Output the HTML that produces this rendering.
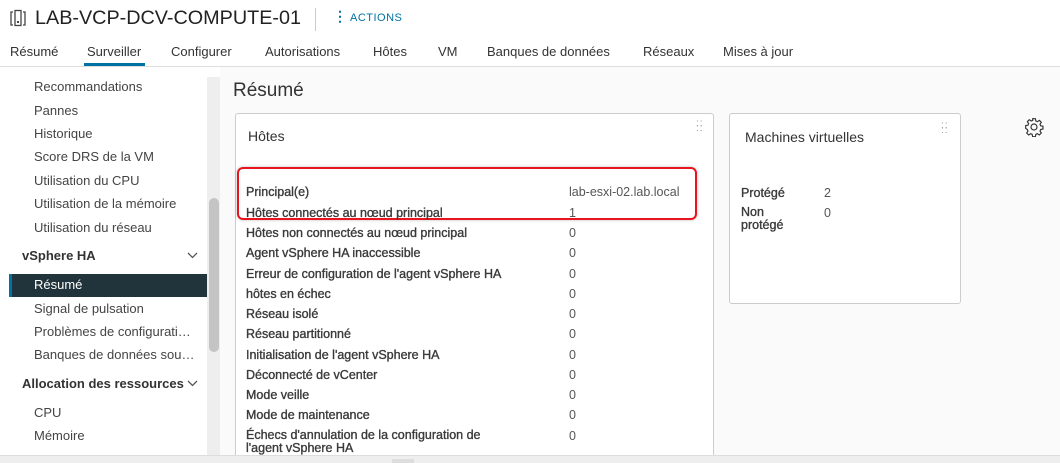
<!DOCTYPE html><html><head><meta charset="utf-8"><style>
*{margin:0;padding:0;box-sizing:border-box}
body{width:1060px;height:463px;overflow:hidden;background:#fff;font-family:"Liberation Sans",sans-serif;color:#333;position:relative}
.a{position:absolute;white-space:nowrap}
.nav{font-size:13px;color:#444}
.tab{font-size:13px;color:#333;top:44px}
.lbl{font-size:12.5px;color:#3a3a3a;left:246px;-webkit-text-stroke:0.35px #3a3a3a}
.val{font-size:12.5px;color:#555;left:569px}
</style></head><body>
<svg class="a" style="left:10px;top:9px" width="16" height="18" viewBox="0 0 16 18"><path d="M3 3H1v13h2M13 3h2v13h-2" fill="none" stroke="#444" stroke-width="1.3"/><rect x="5" y="1.5" width="6" height="15" fill="none" stroke="#444" stroke-width="1.3"/><rect x="7" y="12" width="2" height="2" fill="#444"/></svg>
<div class="a" style="left:35px;top:7px;font-size:19.8px;color:#222">LAB-VCP-DCV-COMPUTE-01</div>
<div class="a" style="left:315px;top:8px;width:1px;height:23px;background:#ccc"></div>
<div class="a" style="left:333px;top:9px;font-size:14px;color:#0072a3;font-weight:bold;line-height:14px">⋮</div>
<div class="a" style="left:350px;top:12px;font-size:11px;color:#0072a3;letter-spacing:.5px">ACTIONS</div>
<div class="a tab" style="left:10px">Résumé</div>
<div class="a tab" style="left:87px">Surveiller</div>
<div class="a tab" style="left:171px">Configurer</div>
<div class="a tab" style="left:265px">Autorisations</div>
<div class="a tab" style="left:373px">Hôtes</div>
<div class="a tab" style="left:438px">VM</div>
<div class="a tab" style="left:487px">Banques de données</div>
<div class="a tab" style="left:643px">Réseaux</div>
<div class="a tab" style="left:723px">Mises à jour</div>
<div class="a" style="left:84px;top:63px;width:61px;height:3px;background:#0072a3"></div>
<div class="a" style="left:0;top:66px;width:1060px;height:1px;background:#ddd"></div>
<div class="a" style="left:220px;top:67px;width:840px;height:388px;background:#fafafa"></div>
<div class="a" style="left:207px;top:77px;width:13px;height:378px;background:#eee"></div>
<div class="a" style="left:209px;top:198px;width:10px;height:154px;background:#c4c4c4;border-radius:5px"></div>
<div class="a nav" style="left:34px;top:79px">Recommandations</div>
<div class="a nav" style="left:34px;top:103px">Pannes</div>
<div class="a nav" style="left:34px;top:126px">Historique</div>
<div class="a nav" style="left:34px;top:149px">Score DRS de la VM</div>
<div class="a nav" style="left:34px;top:173px">Utilisation du CPU</div>
<div class="a nav" style="left:34px;top:196px">Utilisation de la mémoire</div>
<div class="a nav" style="left:34px;top:220px">Utilisation du réseau</div>
<div class="a nav" style="left:22px;top:248px;font-weight:bold;color:#333">vSphere HA</div>
<svg class="a" style="left:187px;top:252px" width="11" height="7"><path d="M1 1l4.5 4.5L10 1" fill="none" stroke="#555" stroke-width="1.3"/></svg>
<div class="a" style="left:9px;top:274px;width:198px;height:23px;background:#21333b;border-left:3px solid #0072a3"></div>
<div class="a nav" style="left:34px;top:277px;color:#fff">Résumé</div>
<div class="a nav" style="left:34px;top:301px">Signal de pulsation</div>
<div class="a nav" style="left:34px;top:324px">Problèmes de configurati…</div>
<div class="a nav" style="left:34px;top:347px">Banques de données sou…</div>
<div class="a nav" style="left:22px;top:376px;font-weight:bold;color:#333">Allocation des ressources</div>
<svg class="a" style="left:187px;top:380px" width="11" height="7"><path d="M1 1l4.5 4.5L10 1" fill="none" stroke="#555" stroke-width="1.3"/></svg>
<div class="a nav" style="left:34px;top:405px">CPU</div>
<div class="a nav" style="left:34px;top:428px">Mémoire</div>
<div class="a" style="left:233px;top:80px;font-size:19px;color:#333">Résumé</div>
<div class="a" style="left:235px;top:113px;width:479px;height:350px;background:#fff;border:1px solid #ccc;border-radius:3px"></div>
<div class="a" style="left:248px;top:128px;font-size:14px;color:#333">Hôtes</div>
<div class="a" style="left:696px;top:121px;font-size:10px;color:#999;line-height:5px;letter-spacing:1px">::<br>::</div>
<div class="a" style="left:237px;top:167px;width:460px;height:53px;border:2px solid #e8141e;border-radius:6px;box-shadow:0 0 3px rgba(0,0,0,.25)"></div>
<div class="a lbl" style="top:185px">Principal(e)</div><div class="a val" style="top:185px">lab-esxi-02.lab.local</div>
<div class="a lbl" style="top:206px">Hôtes connectés au nœud principal</div><div class="a val" style="top:206px">1</div>
<div class="a lbl" style="top:226px">Hôtes non connectés au nœud principal</div><div class="a val" style="top:226px">0</div>
<div class="a lbl" style="top:246px">Agent vSphere HA inaccessible</div><div class="a val" style="top:246px">0</div>
<div class="a lbl" style="top:267px">Erreur de configuration de l'agent vSphere HA</div><div class="a val" style="top:267px">0</div>
<div class="a lbl" style="top:287px">hôtes en échec</div><div class="a val" style="top:287px">0</div>
<div class="a lbl" style="top:307px">Réseau isolé</div><div class="a val" style="top:307px">0</div>
<div class="a lbl" style="top:327px">Réseau partitionné</div><div class="a val" style="top:327px">0</div>
<div class="a lbl" style="top:348px">Initialisation de l'agent vSphere HA</div><div class="a val" style="top:348px">0</div>
<div class="a lbl" style="top:368px">Déconnecté de vCenter</div><div class="a val" style="top:368px">0</div>
<div class="a lbl" style="top:388px">Mode veille</div><div class="a val" style="top:388px">0</div>
<div class="a lbl" style="top:408px">Mode de maintenance</div><div class="a val" style="top:408px">0</div>
<div class="a lbl" style="top:429px;line-height:13px">Échecs d'annulation de la configuration de<br>l'agent vSphere HA</div><div class="a val" style="top:429px">0</div>
<div class="a" style="left:0;top:455px;width:1060px;height:8px;background:#eee;border-top:1px solid #ddd"></div>
<div class="a" style="left:392px;top:459px;width:22px;height:4px;background:#ddd"></div>
<div class="a" style="left:729px;top:113px;width:232px;height:191px;background:#fff;border:1px solid #ccc;border-radius:3px"></div>
<div class="a" style="left:745px;top:129px;font-size:14px;color:#333">Machines virtuelles</div>
<div class="a" style="left:941px;top:123px;font-size:10px;color:#999;line-height:5px;letter-spacing:1px">::<br>::</div>
<div class="a" style="left:741px;top:186px;font-size:12.5px;color:#3a3a3a;-webkit-text-stroke:0.35px #3a3a3a">Protégé</div>
<div class="a" style="left:824px;top:186px;font-size:12.5px;color:#555">2</div>
<div class="a" style="left:741px;top:206px;font-size:12.5px;color:#3a3a3a;-webkit-text-stroke:0.35px #3a3a3a;line-height:13px">Non<br>protégé</div>
<div class="a" style="left:824px;top:206px;font-size:12.5px;color:#555">0</div>
<svg class="a" style="left:1024px;top:117px" width="20" height="20" viewBox="0 0 24 24"><path d="M10.3 2h3.4l.5 2.8 1.9.8 2.3-1.6 2.4 2.4-1.6 2.3.8 1.9 2.8.5v3.4l-2.8.5-.8 1.9 1.6 2.3-2.4 2.4-2.3-1.6-1.9.8-.5 2.8h-3.4l-.5-2.8-1.9-.8-2.3 1.6-2.4-2.4 1.6-2.3-.8-1.9L2 13.7v-3.4l2.8-.5.8-1.9L4 5.6 6.4 3.2l2.3 1.6 1.9-.8z" fill="none" stroke="#333" stroke-width="1.4" stroke-linejoin="round"/><circle cx="12" cy="12" r="3.6" fill="none" stroke="#333" stroke-width="1.4"/></svg>
</body></html>
